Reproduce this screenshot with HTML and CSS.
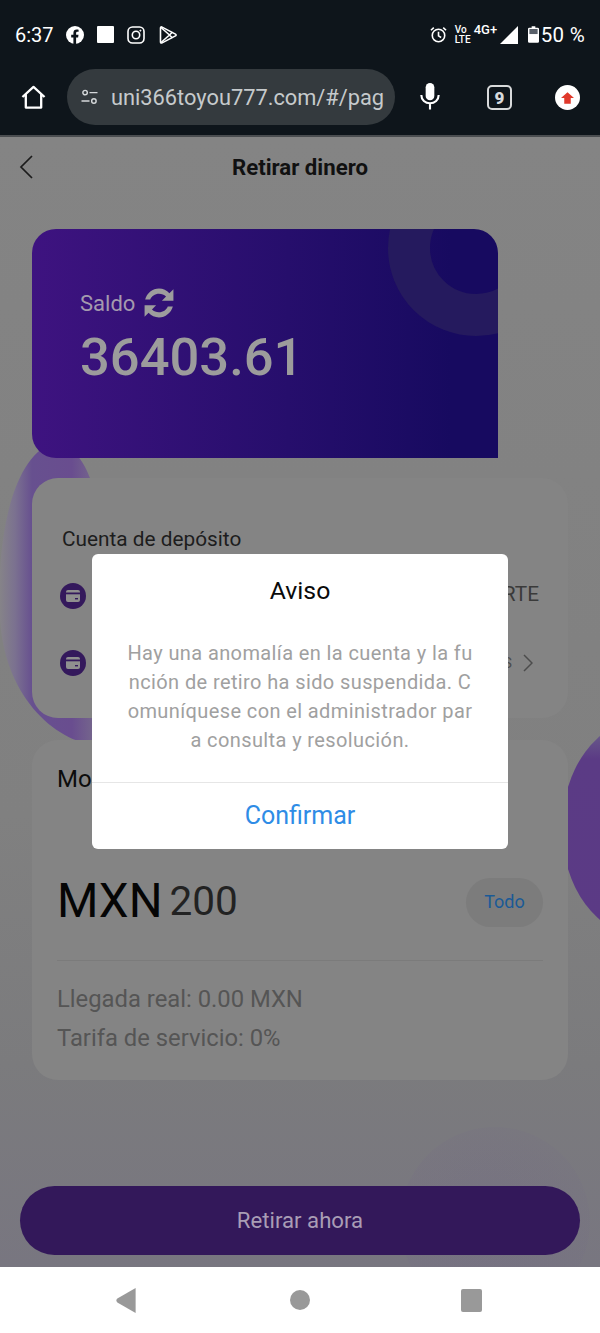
FILE: index.html
```html
<!DOCTYPE html>
<html lang="es">
<head>
<meta charset="utf-8">
<title>Retirar dinero</title>
<link rel="stylesheet" href="styles.css">
</head>
<body>
<div class="chrome">
  <div class="status">
    <span class="time">6:37</span>
    <svg class="ic-fb" viewBox="0 0 18 18"><circle cx="9" cy="9" r="9" fill="#fff"/><path d="M7.4 18v-6.600H5.200V8.800h2.200V6.900c0-2.200 1.300-3.400 3.300-3.400.9 0 1.900.2 1.900.2v2.100h-1.100c-1.100 0-1.400.7-1.400 1.300v1.700h2.400l-.4 2.600h-2V18z" fill="#0e151b"/></svg>
    <span class="ic-square"></span>
    <svg class="ic-ig" viewBox="0 0 18 18" fill="none" stroke="#fff" stroke-width="1.600"><rect x="1" y="1" width="16" height="16" rx="4.500"/><circle cx="9" cy="9" r="3.700"/><circle cx="13.400" cy="4.600" r=".6" fill="#fff" stroke-width=".8"/></svg>
    <svg class="ic-play" viewBox="0 0 18 18" fill="none" stroke="#fff" stroke-width="1.600" stroke-linejoin="round"><path d="M1.500 2c0-1 .8-1.300 1.600-.9l13.400 7c.8.4.8 1.400 0 1.800l-13.400 7c-.8.4-1.600 0-1.600-.9z"/><path d="M2 1.500 10.500 9 2 16.500M10.500 9l3-3M10.500 9l3 3"/></svg>
    <span class="status-right">
      <svg class="ic-alarm" viewBox="0 0 18 18" fill="none" stroke="#fff" stroke-width="1.700"><circle cx="9" cy="10" r="6.600"/><path d="M9 6v4.500l2.800 1.700M1 4.500 4 1.800M17 4.500 14 1.800"/></svg>
      <span class="volte">Vo<br>LTE</span>
      <span class="net">4G+</span>
      <svg class="ic-signal" viewBox="0 0 18 18"><path d="M18 0v18H0z" fill="#fff"/></svg>
      <svg class="ic-batt" viewBox="0 0 12 18"><path d="M4 0h4v1.500h2.500A1.500 1.500 0 0 1 12 3v13.500a1.500 1.500 0 0 1-1.500 1.500h-9A1.500 1.500 0 0 1 0 16.500V3a1.500 1.500 0 0 1 1.500-1.500H4z" fill="#fff"/><rect x="1.500" y="3" width="9" height="5.500" fill="#59606a"/></svg>
      <span class="pct">50 %</span>
    </span>
  </div>
  <div class="toolbar">
    <svg class="ic-home" viewBox="0 0 26 26" fill="none" stroke="#fff" stroke-width="2.400" stroke-linejoin="round"><path d="M1.500 12.500 13 2l11.500 10.500M5 10v13.500h16V10"/></svg>
    <div class="omnibox">
      <svg class="ic-tune" viewBox="0 0 20 20" fill="none" stroke="#d5d8da" stroke-width="1.800"><circle cx="4.500" cy="4.500" r="2.800"/><path d="M10 4.500h10M0 15h10"/><circle cx="15.500" cy="15" r="2.800"/></svg>
      <span class="url">uni366toyou777.com/#/pag</span>
    </div>
    <svg class="ic-mic" viewBox="0 0 20 28"><rect x="5.500" y="0" width="9" height="18" rx="4.500" fill="#fff"/><path d="M1 12.500c0 5 4 8.500 9 8.500s9-3.500 9-8.500M10 21v6.500" fill="none" stroke="#fff" stroke-width="2.200"/></svg>
    <span class="tabs">9</span>
    <span class="update"><svg viewBox="0 0 16 14"><path d="M8 0l8 7h-4v7H4V7H0z" fill="#e0392b"/></svg></span>
  </div>
</div>

<main class="page">
  <svg class="blob-left" viewBox="0 0 120 320">
    <defs>
      <linearGradient id="blobFade" x1="0" x2="1" y1="0" y2="0">
        <stop offset="0" stop-color="#868488"/>
        <stop offset=".13" stop-color="#7b7190"/>
        <stop offset=".27" stop-color="#67508f"/>
        <stop offset=".6" stop-color="#694d8f"/>
        <stop offset=".8" stop-color="#76688c"/>
        <stop offset="1" stop-color="#6e5090"/>
      </linearGradient>
    </defs>
    <path d="M55 3C20 10-5 80 0 180c5 80 60 125 100 125h20V100L90 38C85 25 75 5 55 3z" fill="url(#blobFade)"/>
  </svg>
  <div class="blob-right"></div>
  <div class="blob-bottom"></div>

  <header class="topbar">
    <svg class="back" viewBox="0 0 14 24" fill="none" stroke="#1c1c1c" stroke-width="1.700"><path d="M13 1 2 12l11 11"/></svg>
    <h1>Retirar dinero</h1>
  </header>

  <section class="balance">
    <div class="ring"></div>
    <div class="saldo">
      <span>Saldo</span>
      <svg class="ic-sync" viewBox="2 2 26 26" fill="#9d9d9d"><path d="M3 12C4.500 6.500 9.500 2.500 15 2.500c3.600 0 6.700 1.500 9 4L27.500 3v10h-10l3.600-3.600C19.500 7.800 17.400 7 15 7c-3.500 0-6.500 2.100-7.600 5zM27 18c-1.500 5.500-6.500 9.500-12 9.500-3.600 0-6.700-1.500-9-4L2.500 27V17h10l-3.600 3.600c1.600 1.600 3.700 2.400 6.100 2.400 3.500 0 6.500-2.100 7.600-5z"/></svg>
    </div>
    <div class="amount">36403.61</div>
  </section>

  <section class="card card-account">
    <h2>Cuenta de depósito</h2>
    <div class="acc-row">
      <svg class="ic-card" viewBox="0 0 26 26"><circle cx="13" cy="13" r="13" fill="#34195c"/><rect x="6" y="7" width="14" height="12" rx="2" fill="#8f8f8f"/><rect x="6" y="9.500" width="14" height="1.800" fill="#34195c"/><rect x="15" y="15" width="3" height="1.400" fill="#34195c"/></svg>
      <span class="acc-name">BANORTE</span>
    </div>
    <div class="acc-row">
      <svg class="ic-card" viewBox="0 0 26 26"><circle cx="13" cy="13" r="13" fill="#34195c"/><rect x="6" y="7" width="14" height="12" rx="2" fill="#8f8f8f"/><rect x="6" y="9.500" width="14" height="1.800" fill="#34195c"/><rect x="15" y="15" width="3" height="1.400" fill="#34195c"/></svg>
      <span class="acc-more">S</span>
      <svg class="chev" viewBox="0 0 10 18" fill="none" stroke="#4c4c4c" stroke-width="1.500"><path d="M1 1l8 8-8 8"/></svg>
    </div>
  </section>

  <section class="card card-amount">
    <h2 class="amount-label">Monto</h2>
    <div class="input-row">
      <span class="currency">MXN</span>
      <span class="value">200</span>
      <span class="all">Todo</span>
    </div>
    <div class="rule"></div>
    <p class="info">Llegada real: 0.00 MXN</p>
    <p class="info">Tarifa de servicio: 0%</p>
  </section>

  <button class="submit">Retirar ahora</button>

  <div class="mask">
    <div class="dialog">
      <h3>Aviso</h3>
      <p>Hay una anomalía en la cuenta y la función de retiro ha sido suspendida. Comuníquese con el administrador para consulta y resolución.</p>
      <div class="dialog-btn">Confirmar</div>
    </div>
  </div>
</main>

<nav class="navbar">
  <svg class="nav-back" viewBox="0 0 20 26"><path d="M20 0v26L1 15a2.500 2.500 0 0 1 0-4z" fill="#999"/></svg>
  <span class="nav-home"></span>
  <span class="nav-recent"></span>
</nav>
</body>
</html>
```
FILE: styles.css
```css
* { box-sizing: border-box; margin: 0; padding: 0; }
html, body { width: 600px; height: 1333px; overflow: hidden; }
body { display: flex; flex-direction: column; font-family: Roboto, "Liberation Sans", sans-serif; background: #fff; }

.chrome { background: #0e151b; color: #fff; height: 137px; flex: none; border-bottom: 2px solid #4a4d50; }
.status { height: 69px; display: flex; align-items: center; padding-left: 15px; }
.time { font-size: 20px; width: 51px; }
.ic-fb, .ic-ig, .ic-play { width: 18px; height: 18px; flex: none; }
.ic-square { width: 17px; height: 17px; background: #fff; margin-left: 13px; border-radius: 1px; }
.ic-ig { margin-left: 13px; }
.ic-play { margin-left: 14px; }
.status-right { margin-left: auto; display: flex; align-items: center; padding-right: 15px; }
.ic-alarm { width: 17px; height: 17px; margin-right: 1px; }
.volte { font-size: 10px; line-height: 9.500px; font-weight: 500; margin-left: 7px; width: 17px; }
.net { font-size: 13px; font-weight: 500; margin-left: 2px; width: 26px; position: relative; top: -5px; }
.ic-signal { width: 18px; height: 18px; }
.ic-batt { width: 11px; height: 17px; margin-left: 10px; }
.pct { font-size: 20.500px; margin-left: 2px; letter-spacing: .3px; }

.toolbar { height: 66px; display: flex; align-items: flex-start; padding-left: 21px; }
.ic-home { width: 25px; height: 25px; margin-top: 16px; flex: none; }
.omnibox { width: 328px; height: 56px; margin-left: 21px; background: #343a3e; border-radius: 28px; display: flex; align-items: center; padding-left: 12px; overflow: hidden; flex: none; }
.ic-tune { width: 21px; height: 16px; flex: none; }
.url { font-size: 21.800px; color: #c6cacc; margin-left: 11px; white-space: nowrap; }
.ic-mic { width: 20px; height: 27px; margin: 14px 0 0 25px; flex: none; }
.tabs { width: 25px; height: 25px; margin: 16px 0 0 47px; border: 2.500px solid #d8dadb; border-radius: 5px; font-size: 17px; font-weight: 900; display: flex; align-items: center; justify-content: center; color: #d8dadb; flex: none; }
.update { width: 25px; height: 25px; margin: 16px 0 0 43px; background: #fff; border-radius: 50%; display: flex; align-items: center; justify-content: center; flex: none; }
.update svg { width: 13px; height: 12px; }

.page { position: relative; flex: 1; overflow: hidden; display: flex; flex-direction: column; background: linear-gradient(180deg, #848484 0, #808080 60%, #7b7b7d 82%, #787680 100%); }
.blob-left { position: absolute; left: 0; top: 303px; width: 120px; height: 320px; }
.blob-right { position: absolute; left: 562px; top: 583px; width: 160px; height: 216px; border-radius: 50%; background: linear-gradient(180deg, #6f6a8c 0, #5b3b85 18%, #5b3a85 100%); }
.blob-bottom { position: absolute; left: 400px; top: 990px; width: 190px; height: 190px; border-radius: 50%; background: radial-gradient(circle at 45% 50%, rgba(112,100,135,.25) 0, rgba(112,100,135,.15) 55%, rgba(112,100,135,0) 100%); }

.topbar { position: relative; height: 60px; display: flex; align-items: center; justify-content: center; flex: none; }
.topbar h1 { font-size: 22.200px; font-weight: 700; color: #111; }
.back { position: absolute; left: 19px; top: 18px; width: 14px; height: 24px; }

.balance { position: relative; overflow: hidden; width: 466px; height: 229px; margin: 32px 0 0 32px; flex: none; padding: 59px 0 0 48px; border-radius: 24px 24px 0 24px; background: linear-gradient(90deg, #3e1380 0, #260e6c 55%, #170a60 90%); color: #9c9c9c; }
.ring { position: absolute; left: 356px; top: -69px; width: 176px; height: 176px; border-radius: 50%; border: 42px solid #251a5e; }
.saldo { position: relative; display: flex; align-items: center; gap: 9px; font-size: 22px; height: 30px; color: #a49aae; }
.ic-sync { width: 30px; height: 30px; }
.amount { position: relative; font-size: 52.500px; font-weight: 500; line-height: 62px; margin-top: 8px; }

.card { position: relative; width: 536px; margin-left: 32px; flex: none; border-radius: 26px; background: #848484; }
.card-account { height: 240px; margin-top: 20px; padding: 47px 30px 0; }
.card-account h2 { font-size: 20.800px; font-weight: 400; color: #1d1d1d; line-height: 28px; }
.acc-row { display: flex; align-items: center; height: 67px; margin-left: -2px; }
.acc-row:nth-of-type(1) { margin-top: 9px; }
.ic-card { width: 26px; height: 26px; flex: none; }
.acc-name { margin: 0 -1px 3px auto; font-size: 20.800px; color: #3a3a3a; }
.acc-more { margin-left: auto; font-size: 15px; color: #4c4c4c; margin-right: 11px; }
.chev { width: 10px; height: 18px; margin-right: 5px; }

.card-amount { height: 340px; margin-top: 22px; padding: 24px 25px 0; }
.amount-label { font-size: 24px; font-weight: 400; color: #0c0c0c; line-height: 30px; }
.input-row { display: flex; align-items: center; height: 49px; margin-top: 84px; }
.currency { font-size: 47.500px; color: #050505; padding-bottom: 4px; }
.value { font-size: 40.500px; color: #222; margin-left: 7px; padding-bottom: 4px; }
.all { margin-left: auto; width: 77px; height: 49px; padding-bottom: 2px; border-radius: 25px; background: #7c7c7c; color: #1a5a96; font-size: 18px; display: flex; align-items: center; justify-content: center; }
.rule { height: 1px; background: #7b7b7b; margin-top: 33px; }
.info { font-size: 23.800px; color: #555; line-height: 39px; }
.rule + .info { margin-top: 19px; }

.submit { position: relative; display: block; width: 560px; height: 69px; margin: auto 0 12px 20px; padding-bottom: 2px; border: none; border-radius: 35px; background: #33185a; color: #a99db5; font: 400 22.200px Roboto, "Liberation Sans", sans-serif; flex: none; }

.mask { position: absolute; inset: 0 0 2px 0; display: flex; align-items: center; justify-content: center; }
.dialog { width: 416px; height: 295px; background: #fff; border-radius: 6px; display: flex; flex-direction: column; text-align: center; }
.dialog h3 { font-size: 24.800px; font-weight: 400; color: #0a0a0a; line-height: 30px; margin-top: 22px; }
.dialog p { font-size: 20px; line-height: 29.300px; color: #a0a0a0; padding: 0 34px; margin-top: 33px; word-break: break-all; letter-spacing: .39px; }
.dialog-btn { margin-top: auto; height: 67px; border-top: 1px solid #e6e6e6; color: #2e8ce6; font-size: 25px; display: flex; align-items: center; justify-content: center; }

.navbar { height: 66px; flex: none; background: #fff; display: flex; align-items: center; justify-content: space-between; padding: 0 118px 0 116px; }
.nav-back { width: 20px; height: 25px; }
.nav-home { width: 20px; height: 20px; margin-left: 2px; border-radius: 50%; background: #999; }
.nav-recent { width: 21px; height: 23px; border-radius: 2px; background: #999; }
```
